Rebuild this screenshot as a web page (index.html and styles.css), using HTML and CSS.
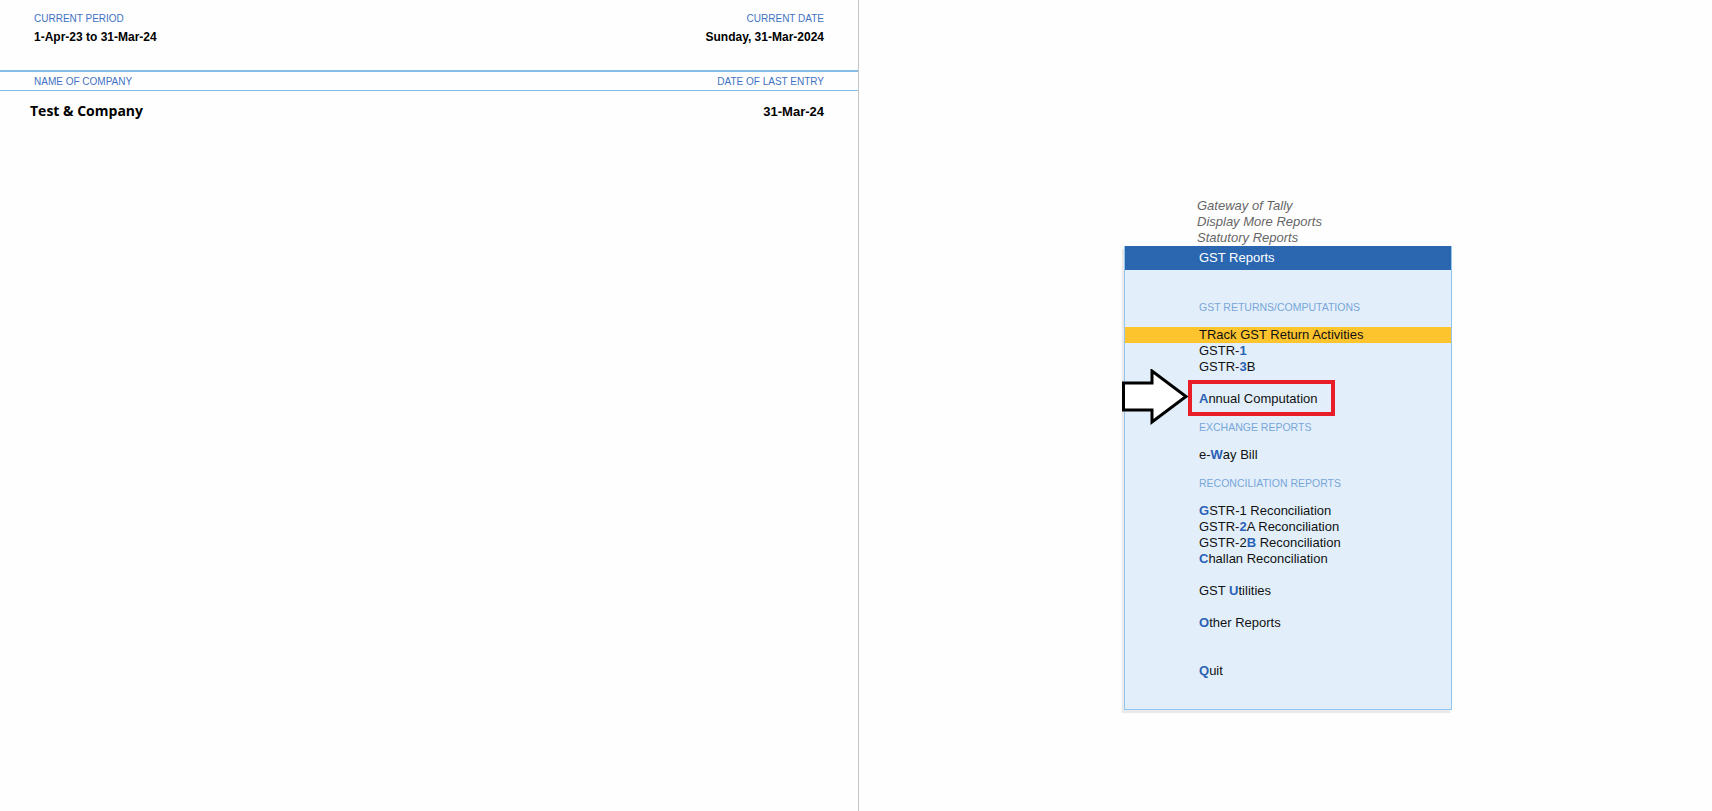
FILE: index.html
```html
<!DOCTYPE html>
<html>
<head>
<meta charset="utf-8">
<title>GST Reports</title>
<link rel="stylesheet" href="styles.css">
</head>
<body>
<div class="app">
  <section class="info">
    <div class="info-top">
      <div class="info-col">
        <div class="cap">CURRENT PERIOD</div>
        <div class="val">1-Apr-23 to 31-Mar-24</div>
      </div>
      <div class="info-col right">
        <div class="cap">CURRENT DATE</div>
        <div class="val">Sunday, 31-Mar-2024</div>
      </div>
    </div>
    <div class="info-head">
      <span class="cap">NAME OF COMPANY</span>
      <span class="cap">DATE OF LAST ENTRY</span>
    </div>
    <div class="company-row">
      <span class="company">Test &amp; Company</span>
      <span class="lastdate">31-Mar-24</span>
    </div>
  </section>
  <main class="stage">
    <div class="menu-wrap">
      <div class="crumbs">
        <div class="crumb">Gateway of Tally</div>
        <div class="crumb">Display More Reports</div>
        <div class="crumb">Statutory Reports</div>
      </div>
      <div class="menu">
        <div class="menu-title">GST Reports</div>
        <div class="menu-body">
          <div class="group">GST RETURNS/COMPUTATIONS</div>
          <div class="item active">TRack GST Return Activities</div>
          <div class="item">GSTR-<b class="k">1</b></div>
          <div class="item">GSTR-<b class="k">3</b>B</div>
          <div class="item blank"></div>
          <div class="item annotated">
            <svg class="arrow" width="70" height="56" viewBox="0 0 70 56"><polygon points="3.5,14 32,14 32,2 66,27.5 32,53 32,41 3.5,41" fill="#ffffff" stroke="#000000" stroke-width="3" stroke-linejoin="miter"/></svg>
            <span class="redbox"></span>
            <b class="k">A</b>nnual Computation
          </div>
          <div class="group">EXCHANGE REPORTS</div>
          <div class="item">e-<b class="k">W</b>ay Bill</div>
          <div class="group">RECONCILIATION REPORTS</div>
          <div class="item"><b class="k">G</b>STR-1 Reconciliation</div>
          <div class="item">GSTR-<b class="k">2</b>A Reconciliation</div>
          <div class="item">GSTR-2<b class="k">B</b> Reconciliation</div>
          <div class="item"><b class="k">C</b>hallan Reconciliation</div>
          <div class="item blank"></div>
          <div class="item">GST <b class="k">U</b>tilities</div>
          <div class="item blank"></div>
          <div class="item"><b class="k">O</b>ther Reports</div>
          <div class="item blank"></div>
          <div class="item blank"></div>
          <div class="item"><b class="k">Q</b>uit</div>
        </div>
      </div>
    </div>
  </main>
</div>
</body>
</html>
```

FILE: styles.css
```css
html, body {
  margin: 0;
  padding: 0;
  background: #fefefe;
}
body {
  font-family: "Liberation Sans", Arial, sans-serif;
  color: #000;
}
.app {
  display: flex;
  width: 1712px;
  height: 811px;
  overflow: hidden;
}
.info {
  width: 858px;
  flex: none;
  border-right: 1px solid #c6c6c6;
  display: flex;
  flex-direction: column;
}
.info-top {
  display: flex;
  justify-content: space-between;
  padding: 13px 34px 0 34px;
  height: 70px;
  box-sizing: border-box;
}
.info-col.right {
  text-align: right;
}
.cap {
  font-size: 10px;
  line-height: 12px;
  color: #4272c4;
}
.val {
  font-size: 12px;
  font-weight: bold;
  line-height: 14px;
  margin-top: 5px;
}
.info-head {
  display: flex;
  justify-content: space-between;
  border-top: 2px solid #86bbe6;
  border-bottom: 1px solid #86bbe6;
  padding: 4px 34px 2px 34px;
  height: 21px;
  box-sizing: border-box;
  line-height: 12px;
}
.company-row {
  display: flex;
  justify-content: space-between;
  align-items: baseline;
  padding: 10px 34px 0 30px;
}
.company {
  font-family: "Open Sans", "DejaVu Sans", sans-serif;
  font-weight: 700;
  font-size: 14px;
}
.lastdate {
  font-size: 13px;
  font-weight: bold;
}
.stage {
  flex: 1;
  display: flex;
  justify-content: center;
  padding-top: 198px;
  padding-left: 5px;
}
.menu-wrap {
  width: 328px;
}
.crumbs {
  padding-left: 73px;
}
.crumb {
  font-size: 13px;
  line-height: 16px;
  font-style: italic;
  color: #666666;
}
.menu {
  background: #e2effb;
  border: 1px solid #93c5f1;
  border-top: none;
  box-shadow: -2px 3px 1px rgba(0, 0, 0, 0.08);
  padding-bottom: 30px;
}
.menu-title {
  background: #2a67b0;
  color: #ffffff;
  font-size: 13px;
  line-height: 24px;
  height: 24px;
  padding-left: 74px;
  margin: 0 -1px;
  border-left: 1px solid #93c5f1;
  border-right: 1px solid #93c5f1;
}
.menu-body {
  padding-top: 17px;
}
.group {
  font-size: 10.5px;
  line-height: 16px;
  color: #79a6d8;
  padding: 12px 0 12px 74px;
}
.item {
  font-size: 13px;
  line-height: 16px;
  height: 16px;
  padding-left: 74px;
  color: #111111;
  position: relative;
}
.item.active {
  background: #fec42e;
}
.k {
  color: #2b62b5;
}
.annotated .arrow {
  position: absolute;
  left: -5px;
  top: -22px;
}
.annotated .redbox {
  position: absolute;
  left: 63px;
  top: -11px;
  width: 147px;
  height: 36px;
  box-sizing: border-box;
  border: 4px solid #e71d2a;
}
```
